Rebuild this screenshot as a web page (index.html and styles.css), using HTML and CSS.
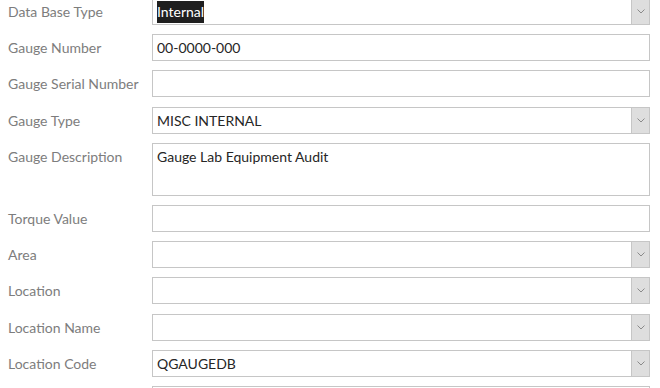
FILE: index.html
```html
<!DOCTYPE html>
<html>
<head>
    <title>Gauge Details</title>
    <link rel="stylesheet" href="styles.css">
</head>
<body>

<div class="page">
<div class="gauge_form">
    <div class="label">Data Base Type</div>
    <div class="field combo">
        <span class="value"><span class="selected">Internal</span></span>
        <span class="drop"><svg width="8" height="5" viewBox="0 0 8 5"><path d="M0.5 0.5 L4 4 L7.5 0.5" fill="none" stroke="#8a8a8a" stroke-width="1"/></svg></span>
    </div>

    <div class="label">Gauge Number</div>
    <div class="field"><span class="value">00-0000-000</span></div>

    <div class="label">Gauge Serial Number</div>
    <div class="field"><span class="value"></span></div>

    <div class="label">Gauge Type</div>
    <div class="field combo">
        <span class="value">MISC INTERNAL</span>
        <span class="drop"><svg width="8" height="5" viewBox="0 0 8 5"><path d="M0.5 0.5 L4 4 L7.5 0.5" fill="none" stroke="#8a8a8a" stroke-width="1"/></svg></span>
    </div>

    <div class="label">Gauge Description</div>
    <div class="field memo"><span class="value">Gauge Lab Equipment Audit</span></div>

    <div class="label">Torque Value</div>
    <div class="field"><span class="value"></span></div>

    <div class="label">Area</div>
    <div class="field combo">
        <span class="value"></span>
        <span class="drop"><svg width="8" height="5" viewBox="0 0 8 5"><path d="M0.5 0.5 L4 4 L7.5 0.5" fill="none" stroke="#8a8a8a" stroke-width="1"/></svg></span>
    </div>

    <div class="label">Location</div>
    <div class="field combo">
        <span class="value"></span>
        <span class="drop"><svg width="8" height="5" viewBox="0 0 8 5"><path d="M0.5 0.5 L4 4 L7.5 0.5" fill="none" stroke="#8a8a8a" stroke-width="1"/></svg></span>
    </div>

    <div class="label">Location Name</div>
    <div class="field combo">
        <span class="value"></span>
        <span class="drop"><svg width="8" height="5" viewBox="0 0 8 5"><path d="M0.5 0.5 L4 4 L7.5 0.5" fill="none" stroke="#8a8a8a" stroke-width="1"/></svg></span>
    </div>

    <div class="label">Location Code</div>
    <div class="field combo">
        <span class="value">QGAUGEDB</span>
        <span class="drop"><svg width="8" height="5" viewBox="0 0 8 5"><path d="M0.5 0.5 L4 4 L7.5 0.5" fill="none" stroke="#8a8a8a" stroke-width="1"/></svg></span>
    </div>

    <div class="label"></div>
    <div class="field"><span class="value"></span></div>
</div>
</div>

</body>
</html>
```

FILE: styles.css
```css
body {
    margin: 0;
    background: #fff;
    font-family: Lato, "Open Sans", sans-serif;
    font-size: 14px;
}

.page {
    height: 388px;
    overflow: hidden;
}

.gauge_form {
    display: grid;
    grid-template-columns: 144px 498px;
    row-gap: 9.2px;
    margin: -2px 0 0 8px;
}

.label {
    color: #7d7d7d;
    line-height: 27px;
    white-space: nowrap;
}

.field {
    display: flex;
    height: 27px;
    box-sizing: border-box;
    border: 1px solid #c6c6c6;
    background: #fff;
}

.field .value {
    flex: 1;
    padding-left: 4px;
    line-height: 25px;
    color: #262626;
    white-space: nowrap;
}

.memo {
    height: 53px;
}

.selected {
    background: #1f1f1f;
    color: #fff;
    padding: 2px 0 3px 0;
}

.drop {
    width: 17px;
    display: flex;
    align-items: center;
    justify-content: center;
    background: #dedede;
    border-left: 1px solid #c6c6c6;
}
```
